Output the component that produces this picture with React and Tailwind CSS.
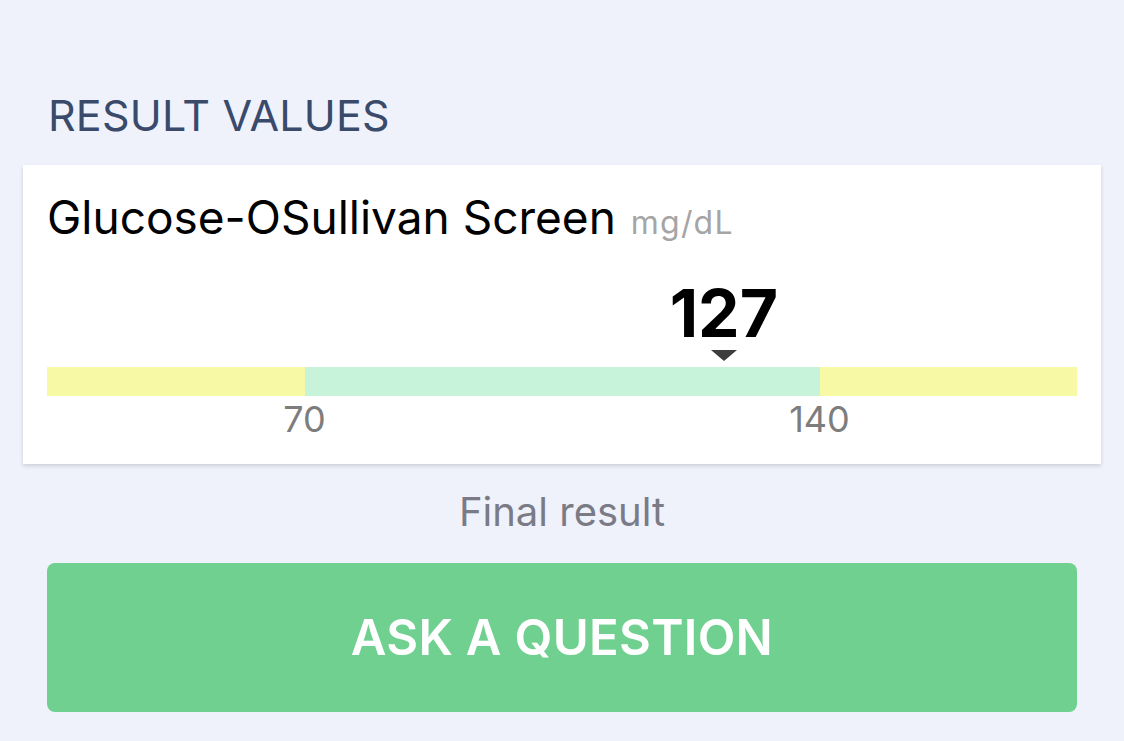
export default function App() {
  const pct = ((127 - 70) / 70) * 50 + 25;
  return (
    <div className="w-[1124px] h-[741px] bg-[#eff2fb] overflow-hidden" style={{ fontFamily: "Inter, 'Noto Sans', sans-serif" }}>
      <div className="pt-[91px] px-[48px] text-[#3a4a6b] text-[43px] leading-[48px] tracking-[0.2px]">RESULT VALUES</div>
      <div className="mx-[23px] mt-[26px] h-[299px] bg-white shadow-[0_2px_4px_rgba(0,0,0,0.15)] px-[24px] pt-[24px]">
        <div className="flex items-baseline gap-[15px] text-black">
          <span className="text-[46px] leading-[56px]">Glucose-OSullivan Screen</span>
          <span className="text-[32px] tracking-[1.2px] text-[#a5a5a5]">mg/dL</span>
        </div>
        <div className="mt-[33px] flex">
          <div className="shrink-0" style={{ width: pct + "%" }} />
          <div className="w-0 flex flex-col items-center">
            <span className="text-[66px] leading-[66px] font-bold text-black">127</span>
            <svg width="26" height="11" viewBox="0 0 26 11" className="mt-[4px] shrink-0">
              <polygon points="0,0 26,0 13,11" fill="#3d3d3d" />
            </svg>
          </div>
        </div>
        <div className="mt-[6px] flex h-[29px]">
          <div className="w-1/4 bg-[#f8f9a4]" />
          <div className="w-1/2 bg-[#c7f3da]" />
          <div className="w-1/4 bg-[#f8f9a4]" />
        </div>
        <div className="mt-[3px] grid grid-cols-4 text-[36px] leading-[40px] text-[#7d7d7d]">
          <div className="col-span-2 text-center">70</div>
          <div className="col-span-2 text-center">140</div>
        </div>
      </div>
      <div className="mt-[24px] text-center text-[40px] leading-[48px] text-[#7a7b86]">Final result</div>
      <div className="mx-[47px] mt-[27px] h-[149px] rounded-[8px] bg-[#6fd08f] flex items-center justify-center">
        <span className="text-white text-[49px] font-semibold tracking-[0.3px]">ASK A QUESTION</span>
      </div>
    </div>
  );
}
